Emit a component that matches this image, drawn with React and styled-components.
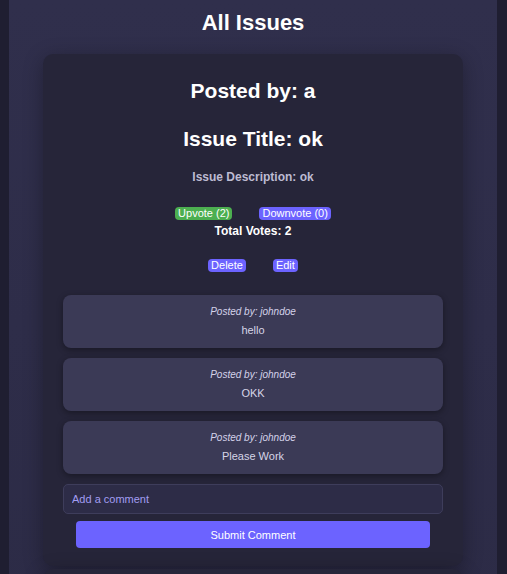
import styled, { createGlobalStyle } from "styled-components";

const GlobalStyle = createGlobalStyle`
  body {
    margin: 0;
    background-color: #1f1e31;
    font-family: "Liberation Sans", Arial, sans-serif;
  }
`;

const comments = [
  { author: "johndoe", text: "hello" },
  { author: "johndoe", text: "OKK" },
  { author: "johndoe", text: "Please Work" },
];

export default function App() {
  return (
    <>
      <GlobalStyle />
      <Page>
        <Title>All Issues</Title>
        <IssueCard>
          <Heading $top={4}>Posted by: a</Heading>
          <Heading $top={22}>Issue Title: ok</Heading>
          <Description>Issue Description: ok</Description>
          <ButtonRow $top={22}>
            <SmallButton $color="#4caf50">Upvote (2)</SmallButton>
            <SmallButton>Downvote (0)</SmallButton>
          </ButtonRow>
          <TotalVotes>Total Votes: 2</TotalVotes>
          <ButtonRow $top={20}>
            <SmallButton>Delete</SmallButton>
            <SmallButton>Edit</SmallButton>
          </ButtonRow>
          <CommentList>
            {comments.map((c, i) => (
              <Comment key={i}>
                <CommentAuthor>Posted by: {c.author}</CommentAuthor>
                <CommentText>{c.text}</CommentText>
              </Comment>
            ))}
          </CommentList>
          <CommentInput type="text" placeholder="Add a comment" />
          <SubmitButton>Submit Comment</SubmitButton>
        </IssueCard>
        <IssueCard />
      </Page>
    </>
  );
}

const Page = styled.div`
  margin: 0 10px 0 9px;
  min-height: 574px;
  background: linear-gradient(to bottom, #302f4c 0%, #2c2b46 100%);
  padding: 0 34px;
  overflow: hidden;
`;

const Title = styled.h1`
  margin: 0;
  padding-top: 9px;
  height: 54px;
  box-sizing: border-box;
  text-align: center;
  color: #ffffff;
  font-size: 22px;
  line-height: 28px;
  font-weight: bold;
`;

const IssueCard = styled.div`
  background-color: #262539;
  border-radius: 10px;
  padding: 20px 20px 18px;
  margin-bottom: 3px;
  box-shadow: 0 4px 20px rgba(0, 0, 0, 0.3);
  display: flex;
  flex-direction: column;
  align-items: stretch;
  min-height: 40px;
`;

const Heading = styled.h2`
  margin: ${(p) => p.$top}px 0 0;
  text-align: center;
  color: #ffffff;
  font-size: 21px;
  line-height: 26px;
  font-weight: bold;
`;

const Description = styled.p`
  margin: 17px 0 0;
  text-align: center;
  color: #bdbbd2;
  font-size: 12px;
  line-height: 16px;
  font-weight: bold;
`;

const ButtonRow = styled.div`
  margin-top: ${(p) => p.$top}px;
  display: flex;
  justify-content: center;
  gap: 27px;
`;

const SmallButton = styled.button`
  border: none;
  border-radius: 4px;
  padding: 0 3px;
  background-color: ${(p) => p.$color || "#6c63ff"};
  color: #ffffff;
  font-family: "Liberation Sans", Arial, sans-serif;
  font-size: 11px;
  line-height: 13px;
  cursor: pointer;
`;

const TotalVotes = styled.p`
  margin: 3px 0 0;
  text-align: center;
  color: #ffffff;
  font-size: 12px;
  line-height: 16px;
  font-weight: bold;
`;

const CommentList = styled.div`
  margin-top: 23px;
  display: flex;
  flex-direction: column;
  gap: 10px;
`;

const Comment = styled.div`
  background-color: #3b3a56;
  border-radius: 8px;
  padding: 10px;
  text-align: center;
  box-shadow: 0 2px 6px rgba(0, 0, 0, 0.35);
`;

const CommentAuthor = styled.div`
  color: #d4d2ea;
  font-size: 10px;
  line-height: 14px;
  font-style: italic;
`;

const CommentText = styled.div`
  margin-top: 3px;
  color: #d6d5e6;
  font-size: 11px;
  line-height: 16px;
`;

const CommentInput = styled.input`
  margin-top: 10px;
  height: 30px;
  box-sizing: border-box;
  padding: 0 8px;
  background-color: #2d2c47;
  border: 1px solid #3e3d5b;
  border-radius: 5px;
  color: #ffffff;
  font-family: "Liberation Sans", Arial, sans-serif;
  font-size: 11px;
  outline: none;

  &::placeholder {
    color: #a29df2;
  }
`;

const SubmitButton = styled.button`
  margin: 7px 13px 0;
  height: 27px;
  border: none;
  border-radius: 4px;
  background-color: #6c63ff;
  color: #ffffff;
  font-family: "Liberation Sans", Arial, sans-serif;
  font-size: 11px;
  cursor: pointer;
`;
